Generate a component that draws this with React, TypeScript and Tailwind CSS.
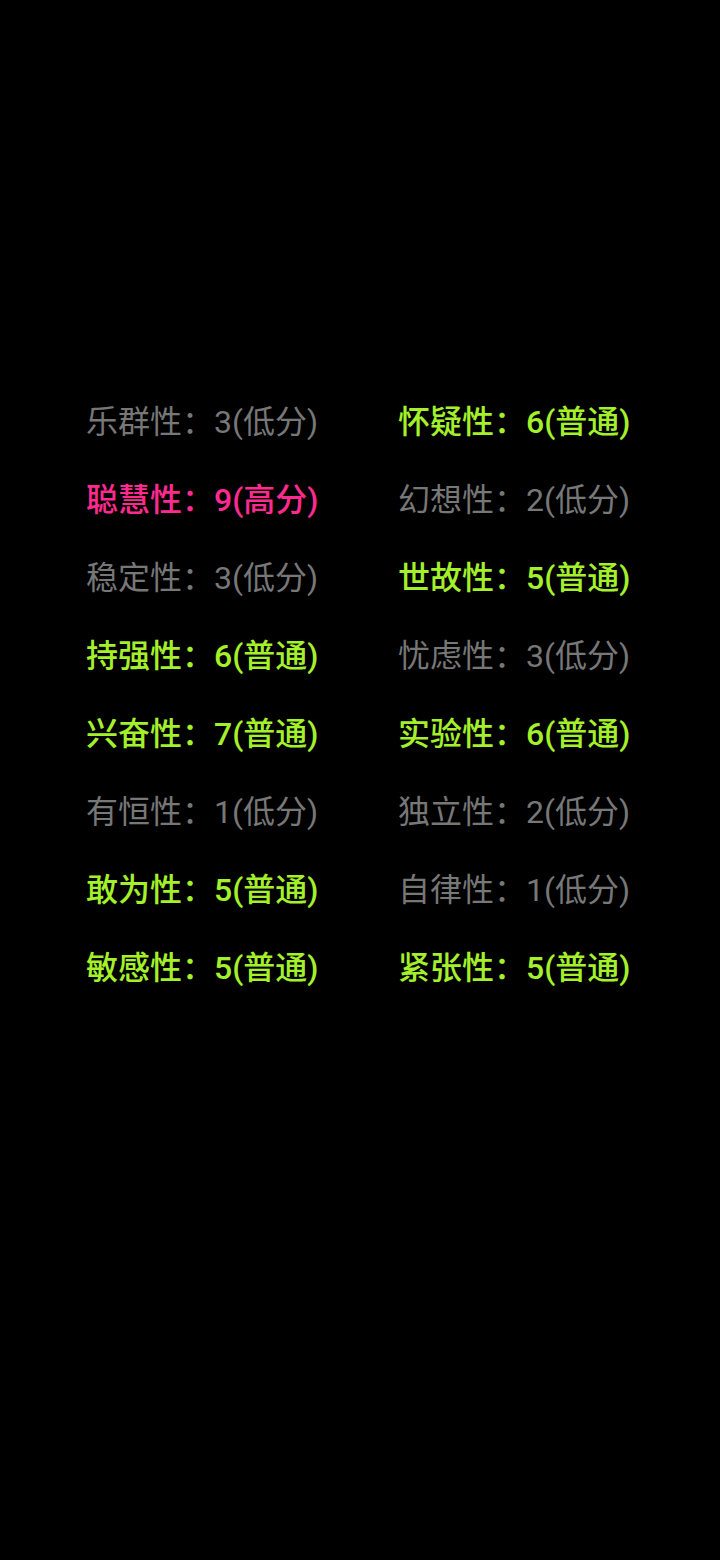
const items: { name: string; value: string; level: "low" | "mid" | "high" }[] = [
  { name: "乐群性", value: "3(低分)", level: "low" },
  { name: "怀疑性", value: "6(普通)", level: "mid" },
  { name: "聪慧性", value: "9(高分)", level: "high" },
  { name: "幻想性", value: "2(低分)", level: "low" },
  { name: "稳定性", value: "3(低分)", level: "low" },
  { name: "世故性", value: "5(普通)", level: "mid" },
  { name: "持强性", value: "6(普通)", level: "mid" },
  { name: "忧虑性", value: "3(低分)", level: "low" },
  { name: "兴奋性", value: "7(普通)", level: "mid" },
  { name: "实验性", value: "6(普通)", level: "mid" },
  { name: "有恒性", value: "1(低分)", level: "low" },
  { name: "独立性", value: "2(低分)", level: "low" },
  { name: "敢为性", value: "5(普通)", level: "mid" },
  { name: "自律性", value: "1(低分)", level: "low" },
  { name: "敏感性", value: "5(普通)", level: "mid" },
  { name: "紧张性", value: "5(普通)", level: "mid" },
];

function levelClass(level: "low" | "mid" | "high") {
  switch (level) {
    case "high":
      return "text-[#ff2a8f] font-medium";
    case "mid":
      return "text-[#a4f02a] font-medium";
    default:
      return "text-[#777777] font-normal";
  }
}

export default function App() {
  return (
    <div
      className="w-[720px] h-[1560px] bg-black pt-[383px] px-[86px]"
      style={{ fontFamily: 'Roboto, "Noto Sans CJK SC", sans-serif' }}
    >
      <div className="grid grid-cols-[312px_1fr]">
        {items.map((it) => (
          <div
            key={it.name}
            className={`h-[78px] flex items-center text-[32px] whitespace-nowrap ${levelClass(it.level)}`}
          >
            {it.name}：{it.value}
          </div>
        ))}
      </div>
    </div>
  );
}
